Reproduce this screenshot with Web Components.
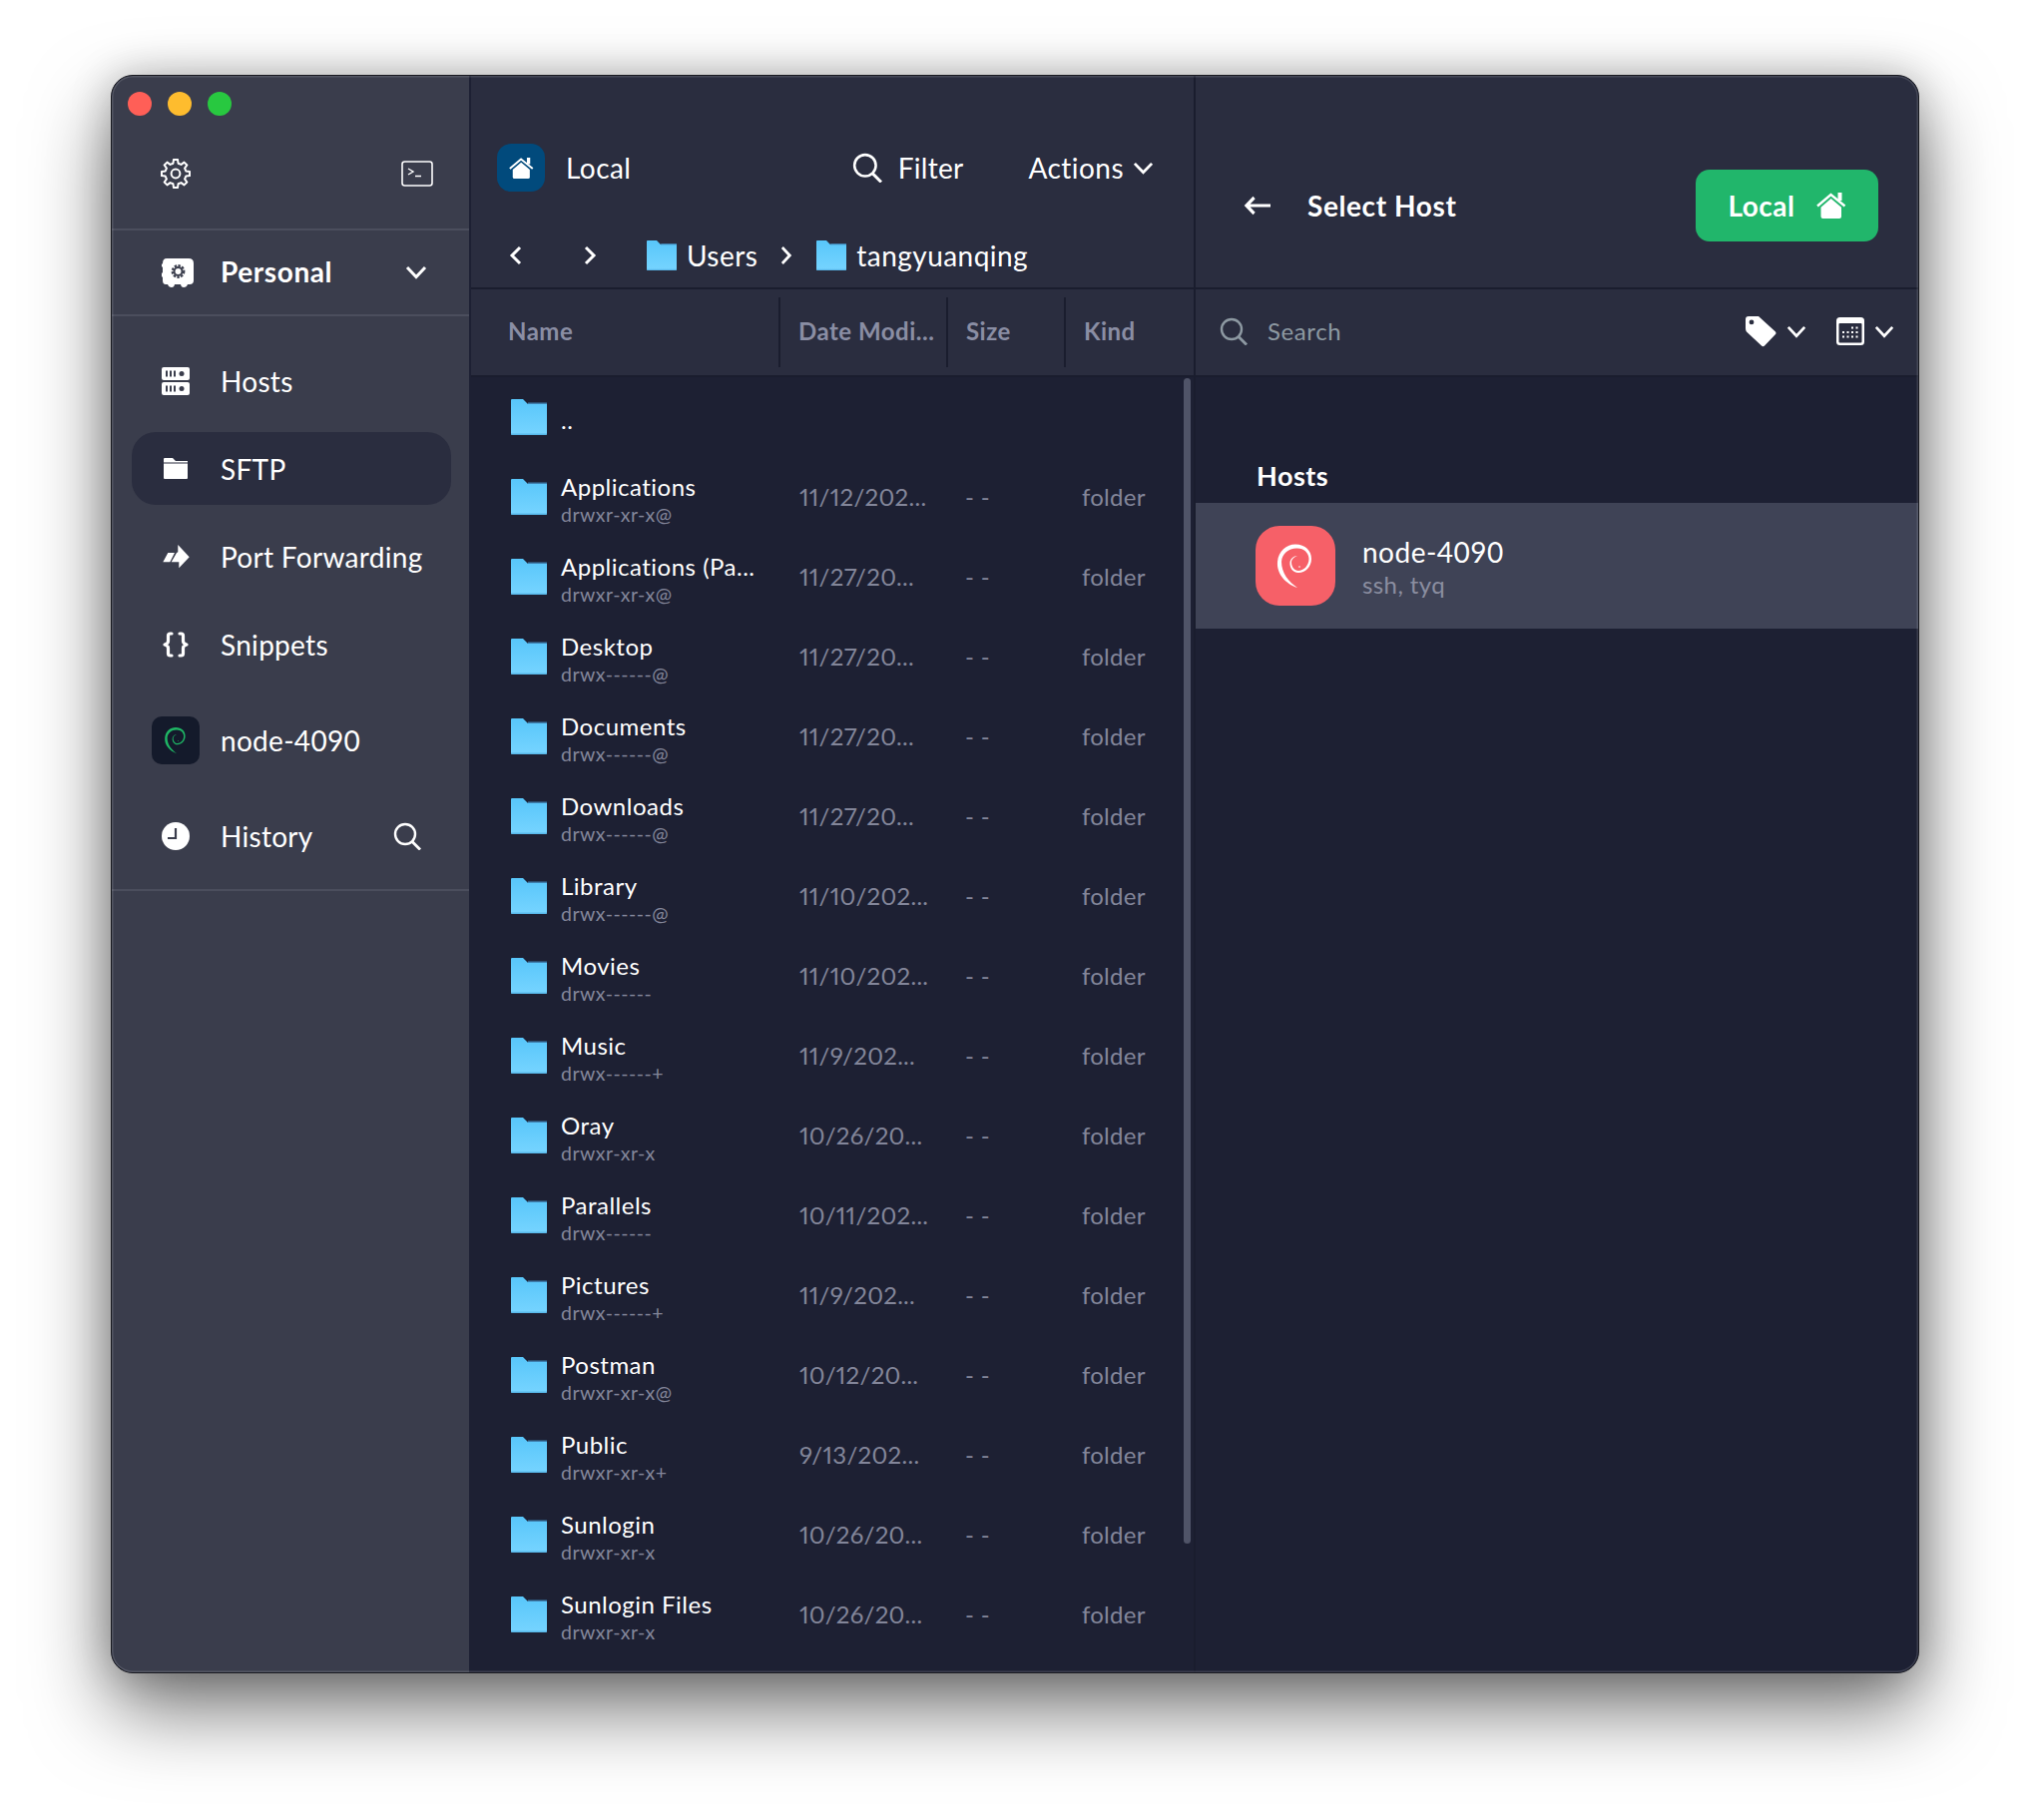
<!DOCTYPE html>
<html lang="en">
<head>
<meta charset="utf-8">
<title>SFTP</title>
<style>
  html,body{margin:0;background:#fff}
  body{padding:75px 0 0 111px;height:1824px;box-sizing:border-box;overflow:hidden;font-family:"Lato","Noto Sans",sans-serif;color:#fff}
</style>
</head>
<body>
<app-window>
  <side-bar slot="side">
    <nav-item icon="hosts">Hosts</nav-item>
    <nav-item icon="sftp" active>SFTP</nav-item>
    <nav-item icon="port">Port Forwarding</nav-item>
    <nav-item icon="snippets">Snippets</nav-item>
    <nav-item icon="debian" spaced>node-4090</nav-item>
    <nav-item icon="clock" spaced search>History</nav-item>
  </side-bar>
  <file-panel slot="files">
    <file-row name=".."></file-row>
    <file-row name="Applications" perm="drwxr-xr-x@" date="11/12/202..."></file-row>
    <file-row name="Applications (Pa..." perm="drwxr-xr-x@" date="11/27/20..."></file-row>
    <file-row name="Desktop" perm="drwx------@" date="11/27/20..."></file-row>
    <file-row name="Documents" perm="drwx------@" date="11/27/20..."></file-row>
    <file-row name="Downloads" perm="drwx------@" date="11/27/20..."></file-row>
    <file-row name="Library" perm="drwx------@" date="11/10/202..."></file-row>
    <file-row name="Movies" perm="drwx------" date="11/10/202..."></file-row>
    <file-row name="Music" perm="drwx------+" date="11/9/202..."></file-row>
    <file-row name="Oray" perm="drwxr-xr-x" date="10/26/20..."></file-row>
    <file-row name="Parallels" perm="drwx------" date="10/11/202..."></file-row>
    <file-row name="Pictures" perm="drwx------+" date="11/9/202..."></file-row>
    <file-row name="Postman" perm="drwxr-xr-x@" date="10/12/20..."></file-row>
    <file-row name="Public" perm="drwxr-xr-x+" date="9/13/202..."></file-row>
    <file-row name="Sunlogin" perm="drwxr-xr-x" date="10/26/20..."></file-row>
    <file-row name="Sunlogin Files" perm="drwxr-xr-x" date="10/26/20..."></file-row>
  </file-panel>
  <host-panel slot="hosts"></host-panel>
</app-window>
<script>
function gearPath(){
  const cx=15,cy=15,n=8,R=14.2,r=10.6;let d='';
  for(let i=0;i<n;i++){
    const a=i*2*Math.PI/n-Math.PI/2,s=Math.PI/n;
    const pts=[[r,a-s*.62],[R,a-s*.36],[R,a+s*.36],[r,a+s*.62]];
    pts.forEach((p,j)=>{
      const x=(cx+p[0]*Math.cos(p[1])).toFixed(2),y=(cy+p[0]*Math.sin(p[1])).toFixed(2);
      d+=(i===0&&j===0?'M':'L')+x+' '+y;
    });
  }
  return d+'Z';
}
const SWIRL='M42 62C30 58 21 48 22 36C23 25 31 18.5 40 18.5C50 18.5 56 25 56 33C56 41 50 47 43 47C37 47 34 41.5 34.5 36.5C35 33 38 30 42 30C39 31 36 33.5 36 36.5C36 41 39 45 43 45C48 45 53.5 40 53.5 33C53.5 27 48 22 41 22.5C33 22.5 26.5 28 26 36C26 47 33 56 42 62Z';
const ICONS={
  gear:['0 0 30 30',`<path d="${gearPath()}" fill="none" stroke="currentColor" stroke-width="2" stroke-linejoin="round"/><circle cx="15" cy="15" r="4.4" fill="none" stroke="currentColor" stroke-width="2"/>`],
  terminal:['0 0 32 26',`<rect x="1" y="1" width="30" height="24" rx="2.5" fill="none" stroke="currentColor" stroke-width="1.6"/><path d="M7 8l5 3-5 3" fill="none" stroke="currentColor" stroke-width="1.4"/><path d="M14 15.5h6" stroke="currentColor" stroke-width="1.4"/>`],
  vault:['0 0 32 29',`<path fill="currentColor" fill-rule="evenodd" d="M5 0H27Q32 0 32 5V22Q32 26 28 26H26Q25 29 22 29Q19.500 29 19 26H13Q12.500 29 10 29Q7 29 6 26H4Q1 26 1 22V19L0 18V15L1 14V9L0 8V6L1 5Q1 0 5 0Z"/><circle cx="16.500" cy="13" r="5.800" fill="none" stroke="#3a3d4c" stroke-width="2.200" stroke-dasharray="2.400 1.400"/><circle cx="16.500" cy="13" r="4" fill="none" stroke="#3a3d4c" stroke-width="2"/>`],
  hosts:['0 0 28 28',`<rect width="28" height="13" rx="2" y="0" fill="currentColor"/><rect width="28" height="13" rx="2" y="15" fill="currentColor"/><g fill="#3a3d4c"><rect x="4" y="3.500" width="2" height="6"/><rect x="8" y="3.500" width="2" height="6"/><rect x="12" y="3.500" width="2" height="6"/><circle cx="20" cy="6.500" r="2.500"/><rect x="4" y="18.500" width="2" height="6"/><rect x="8" y="18.500" width="2" height="6"/><rect x="12" y="18.500" width="2" height="6"/><circle cx="20" cy="21.500" r="2.500"/></g>`],
  sftp:['0 0 24 21',`<path fill="currentColor" d="M0 1Q0 0 1 0H9L12 3H24V4.500H0ZM0 5.500H24V20Q24 21 23 21H1Q0 21 0 20Z"/>`],
  port:['0 0 27 24',`<path fill="currentColor" d="M.3 17.300 5.300 8H12L7.300 17.300ZM8.700 17.300 14 8 15.300 7.300V0L26.700 12.300 16.300 23.300V17.300Z"/>`],
  snippets:['0 0 28 26',`<path fill="none" stroke="currentColor" stroke-width="3.200" stroke-linecap="round" stroke-linejoin="round" d="M10 2H8.500Q6.500 2 6.500 4V9.500Q6.500 12 3 13Q6.500 14 6.500 16.500V22Q6.500 24 8.500 24H10M18 2H19.500Q21.500 2 21.500 4V9.500Q21.500 12 25 13Q21.500 14 21.500 16.500V22Q21.500 24 19.500 24H18"/>`],
  clock:['0 0 28 28',`<circle cx="14" cy="14" r="14" fill="currentColor"/><path d="M14 6V16H6" fill="none" stroke="#3a3d4c" stroke-width="2.200"/>`],
  search:['0 0 28 28',`<circle cx="12" cy="12" r="10" fill="none" stroke="currentColor" stroke-width="2.400"/><path d="M19 19.500L27 27.500" stroke="currentColor" stroke-width="2.800"/>`],
  chev:['0 0 22 14',`<path d="M2 2L11 11.500L20 2" fill="none" stroke="currentColor" stroke-width="3"/>`],
  left:['0 0 13 20',`<path d="M11 2L3 10L11 18" fill="none" stroke="currentColor" stroke-width="3"/>`],
  right:['0 0 13 20',`<path d="M2 2L10 10L2 18" fill="none" stroke="currentColor" stroke-width="3"/>`],
  back:['0 0 28 20',`<path d="M11 2L3 10L11 18M3 10H28" fill="none" stroke="currentColor" stroke-width="3.200"/>`],
  home:['0 0 30 26',`<path fill="none" stroke="currentColor" stroke-width="2.400" d="M1 13.500L14.500 2L28.500 13.500"/><rect x="21.500" y="0" width="4" height="8" fill="currentColor"/><path fill="currentColor" d="M14.600 6L25 14.800V24Q25 26 23 26H6.500Q4.500 26 4.500 24V14.800Z"/>`],
  tag:['0 0 31 31',`<path fill="currentColor" fill-rule="evenodd" d="M3 0H13L30 15.500Q31 17 30 18L19 29.500Q17.500 31 16 29.500L1 15.500Q0 14.500 0 12V3Q0 0 3 0ZM6 3.500A2.400 2.400 0 1 0 6 8.300A2.400 2.400 0 1 0 6 3.500Z"/>`],
  calendar:['0 0 28 28',`<rect width="28" height="28" rx="3.500" fill="currentColor"/><rect x="2.500" y="6" width="23" height="19.500" rx="1" fill="#2a2d3f"/><g fill="currentColor"><rect x="15" y="9.500" width="2" height="2"/><rect x="19.500" y="9.500" width="2" height="2"/><rect x="6" y="14" width="2" height="2"/><rect x="10.500" y="14" width="2" height="2"/><rect x="15" y="14" width="2" height="2"/><rect x="19.500" y="14" width="2" height="2"/><rect x="6" y="18.500" width="2" height="2"/><rect x="10.500" y="18.500" width="2" height="2"/><rect x="15" y="18.500" width="2" height="2"/><rect x="19.500" y="18.500" width="2" height="2"/></g>`],
  swirl:['0 0 80 80',`<path fill="currentColor" d="${SWIRL}"/><circle cx="44" cy="41" r=".8" fill="currentColor"/>`]
};
let folderId=0;
class UiIcon extends HTMLElement{
  connectedCallback(){
    const root=this.shadowRoot||this.attachShadow({mode:'open'});
    const ic=ICONS[this.getAttribute('name')];
    const w=this.getAttribute('w'),h=this.getAttribute('h');
    root.innerHTML=`<style>:host{display:inline-flex;flex:none;width:${w}px;height:${h}px}svg{display:block;width:100%;height:100%}</style><svg viewBox="${ic[0]}" preserveAspectRatio="none" aria-hidden="true">${ic[1]}</svg>`;
  }
}
class FolderIcon extends HTMLElement{
  connectedCallback(){
    const root=this.shadowRoot||this.attachShadow({mode:'open'});
    const s=this.getAttribute('size')||36,id='fg'+(++folderId);
    root.innerHTML=`<style>:host{display:inline-flex;flex:none;width:${s}px;height:${s}px}svg{display:block;width:100%;height:100%}</style>
    <svg viewBox="0 0 36 36" aria-hidden="true"><defs><linearGradient id="${id}" x1="0" y1="0" x2="0" y2="1"><stop offset="0" stop-color="#58c6fa"/><stop offset="1" stop-color="#76d4ff"/></linearGradient></defs>
    <path fill="#3f7fae" d="M17 3.500H36V9H17Z"/>
    <path fill="url(#${id})" d="M1 0H12L17 5H36V34.500Q36 36 34.500 36H1.500Q0 36 0 34.500V1Q0 0 1 0Z"/>
    <path fill="#58b8ea" d="M0 34.500H36Q36 36 34.500 36H1.500Q0 36 0 34.500Z"/></svg>`;
  }
}
class AppWindow extends HTMLElement{
  constructor(){
    super();
    this.attachShadow({mode:'open'}).innerHTML=`<style>
      :host{display:grid;grid-template-columns:360px 726px 1fr;width:1812px;height:1602px;box-sizing:border-box;border:1px solid #17181f;border-radius:22px;overflow:hidden;position:relative;background:#1d2033;box-shadow:0 36px 80px rgba(0,0,0,.55),0 0 40px rgba(0,0,0,.22)}
      .edge{position:absolute;inset:0;border-radius:21px;box-shadow:inset 0 0 0 1.500px rgba(255,255,255,.13);pointer-events:none}
    </style><slot name="side"></slot><slot name="files"></slot><slot name="hosts"></slot><div class="edge"></div>`;
  }
}
class SideBar extends HTMLElement{
  constructor(){
    super();
    this.attachShadow({mode:'open'}).innerHTML=`<style>
      :host{display:flex;flex-direction:column;background:#3a3d4c;border-right:2px solid #1d2033;box-sizing:border-box;font-size:28px;color:#fff}
      .top{height:153px;box-sizing:border-box;padding:16px 0 0 16px;display:flex;flex-direction:column}
      .lights{display:flex;gap:16px}
      .lights i{width:24px;height:24px;border-radius:50%;display:block}
      .tools{display:flex;justify-content:space-between;align-items:center;margin-top:43px;padding:0 36px 0 35px;height:30px;margin-left:-2px}
      .vault{height:84px;display:flex;align-items:center;border-top:2px solid #4b4e5d;border-bottom:2px solid #4b4e5d;padding-left:50px;font-weight:700;box-sizing:content-box}
      .vault span{margin-left:27px;flex:1;letter-spacing:.6px;padding-bottom:2px}
      .vault .c{margin-right:42px}
      nav{display:flex;flex-direction:column;gap:16px;padding:29px 18px 17px 20px;border-bottom:2px solid #4b4e5d}
    </style>
    <div class="top"><div class="lights"><i style="background:#ff5f57"></i><i style="background:#febc2e"></i><i style="background:#28c840"></i></div>
      <div class="tools"><ui-icon name="gear" w="30" h="30"></ui-icon><ui-icon name="terminal" w="32" h="26"></ui-icon></div></div>
    <div class="vault"><ui-icon name="vault" w="32" h="29"></ui-icon><span>Personal</span><ui-icon class="c" name="chev" w="22" h="14"></ui-icon></div>
    <nav><slot></slot></nav>`;
  }
}
class NavItem extends HTMLElement{
  connectedCallback(){
    if(this.shadowRoot)return;
    const n=this.getAttribute('icon');
    const sizes={hosts:[28,28],sftp:[24,21],port:[27,24],snippets:[28,26],clock:[28,28]};
    let ic;
    if(n==='debian') ic=`<span class="tile"><ui-icon name="swirl" w="48" h="48"></ui-icon></span>`;
    else ic=`<ui-icon name="${n}" w="${sizes[n][0]}" h="${sizes[n][1]}"></ui-icon>`;
    this.attachShadow({mode:'open'}).innerHTML=`<style>
      :host{display:flex;align-items:center;height:72px;border-radius:24px;padding-left:20px;padding-right:30px;font-size:28px;letter-spacing:.3px;color:#fff;white-space:nowrap}
      :host([active]){background:#2a2d3f;height:73px;margin-top:-1px}
      :host([spaced]){margin-top:8px}
      .i{width:48px;display:flex;justify-content:center;align-items:center;flex:none;margin-right:21px}
      .tile{width:48px;height:48px;border-radius:10px;background:#141a2b;color:#1fb765;display:flex}
      .t{flex:1}
    </style><span class="i">${ic}</span><span class="t"><slot></slot></span>${this.hasAttribute('search')?'<ui-icon name="search" w="28" h="28"></ui-icon>':''}`;
  }
}
class FilePanel extends HTMLElement{
  constructor(){
    super();
    this.attachShadow({mode:'open'}).innerHTML=`<style>
      :host{display:flex;flex-direction:column;background:#1d2033;border-right:2px solid #1a1d2e;box-sizing:border-box;color:#fff;font-size:28px;letter-spacing:.45px;min-width:0}
      header{height:212px;box-sizing:border-box;padding:68px 40px 8px 26px;background:#2a2d3f;display:flex;flex-direction:column;gap:40px}
      .r{display:flex;align-items:center;height:48px}
      .tile{width:48px;height:48px;border-radius:14px;background:#014a7c;display:flex;align-items:center;justify-content:center;margin-right:21px}
      .r .sp{flex:1}
      .filter{margin-right:65px;display:flex;align-items:center;gap:16px;letter-spacing:.3px}
      .crumbs{padding-left:12px}
      .crumbs .f{margin-right:10px}
      .cols{box-sizing:border-box;padding:8px 0;background:#2a2d3f;border-top:2px solid #1a1d2e;border-bottom:2px solid #1a1d2e;display:grid;grid-template-columns:308px 168px 118px 1fr;height:90px;font-size:24px;font-weight:700;color:#8a8ea4;letter-spacing:.5px;align-items:stretch}
      .cols div{display:flex;align-items:center;padding:0 0 4px 18px;border-left:2px solid #1a1d2e}
      .cols div:first-child{border-left:0;padding-left:37px}
      .list{flex:1;position:relative;overflow:hidden}
      .bar{position:absolute;top:1px;right:3px;width:7px;height:1168px;border-radius:4px;background:#505468}
    </style>
    <header>
      <div class="r"><span class="tile"><ui-icon name="home" w="25" h="21"></ui-icon></span><span>Local</span><span class="sp"></span>
        <span class="filter"><ui-icon name="search" w="30" h="30"></ui-icon><span>Filter</span></span>
        <span>Actions</span><ui-icon name="chev" w="21" h="13" style="margin-left:9px"></ui-icon></div>
      <div class="r crumbs"><ui-icon name="left" w="13" h="20"></ui-icon><ui-icon name="right" w="13" h="20" style="margin-left:62px"></ui-icon>
        <folder-icon size="30" style="margin-left:50px" class="f"></folder-icon><span>Users</span><ui-icon name="right" w="12" h="20" style="margin:0 24px 0 23px"></ui-icon><folder-icon size="30" class="f"></folder-icon><span>tangyuanqing</span></div>
    </header>
    <div class="cols"><div>Name</div><div>Date Modi...</div><div>Size</div><div>Kind</div></div>
    <div class="list"><slot></slot><div class="bar"></div></div>`;
  }
}
class FileRow extends HTMLElement{
  connectedCallback(){
    if(this.shadowRoot)return;
    const g=k=>this.getAttribute(k)||'';
    const perm=g('perm'),date=g('date');
    this.attachShadow({mode:'open'}).innerHTML=`<style>
      :host{display:grid;grid-template-columns:308px 168px 118px 1fr;height:80px;align-items:center}
      .n{display:flex;align-items:center;padding-left:40px;gap:14px}
      .txt{display:flex;flex-direction:column;white-space:nowrap;margin-top:-3px}
      .a{font-size:24px;line-height:28px;color:#fff;letter-spacing:.5px}
      .p{font-size:19.500px;line-height:24px;color:#83869a;margin-top:2px;letter-spacing:.5px;margin-bottom:-9px}
      .a.only{padding-top:8px}
      .d{padding:0 0 2px 20px;font-size:24px;color:#83869a;letter-spacing:.3px;white-space:nowrap;font-variant-numeric:proportional-nums}
      .dt{padding-left:21px}
      .k{padding-left:18px;letter-spacing:.25px}
    </style><div class="n"><folder-icon></folder-icon><div class="txt"><div class="a ${perm?'':'only'}"></div>${perm?'<div class="p"></div>':''}</div></div>
    ${perm?`<div class="d dt"></div><div class="d" style="padding-left:19px">- -</div><div class="d k">folder</div>`:''}`;
    const r=this.shadowRoot;
    r.querySelector('.a').textContent=g('name');
    if(perm){r.querySelector('.p').textContent=perm;r.querySelector('.dt').textContent=date;}
  }
}
class HostPanel extends HTMLElement{
  constructor(){
    super();
    this.attachShadow({mode:'open'}).innerHTML=`<style>
      :host{display:flex;flex-direction:column;background:#1d2033;color:#fff;font-size:28px;min-width:0}
      header{height:212px;box-sizing:border-box;padding:48px 40px 0 48px;background:#2a2d3f;display:flex;align-items:center}
      .ttl{font-weight:700;margin-left:37px;flex:1;letter-spacing:.6px}
      button{all:unset;width:183px;height:72px;border-radius:14px;background:#21b66b;display:flex;align-items:center;justify-content:center;gap:21px;font-family:inherit;font-size:28px;font-weight:700;color:#fff;letter-spacing:.5px}
      .search{box-sizing:border-box;background:#2a2d3f;border-top:2px solid #1a1d2e;border-bottom:2px solid #1a1d2e;height:90px;display:flex;align-items:center;padding:0 24px 2px;color:#8d99a2;font-size:24px;letter-spacing:.6px}
      .search .s{margin-right:20px}
      .search .sp{flex:1;padding-bottom:2px}
      .search .w{color:#fff}
      .lab{padding:79px 0 7px 61px;font-size:27px;font-weight:700;line-height:40px;letter-spacing:.5px}
      .host{height:126px;background:#3f4356;display:flex;align-items:center;padding-left:60px;gap:27px}
      .tile{width:80px;height:80px;border-radius:24px;background:#f66068;display:flex;color:#fff}
      .nm{font-size:28px;line-height:34px;letter-spacing:.5px;margin-top:4px}
      .sb{font-size:24px;line-height:32px;color:#8b8ea0;letter-spacing:.4px}
    </style>
    <header><ui-icon name="back" w="27" h="20"></ui-icon><span class="ttl">Select Host</span><button>Local<ui-icon name="home" w="30" h="26"></ui-icon></button></header>
    <div class="search"><ui-icon class="s" name="search" w="28" h="28"></ui-icon><span class="sp">Search</span>
      <ui-icon class="w" name="tag" w="31" h="31"></ui-icon><ui-icon class="w" name="chev" w="20" h="13" style="margin-left:10px"></ui-icon>
      <ui-icon class="w" name="calendar" w="28" h="28" style="margin-left:30px"></ui-icon><ui-icon class="w" name="chev" w="20" h="13" style="margin-left:10px"></ui-icon></div>
    <div class="lab">Hosts</div>
    <div class="host"><span class="tile"><ui-icon name="swirl" w="80" h="80"></ui-icon></span><div><div class="nm">node-4090</div><div class="sb">ssh, tyq</div></div></div>`;
  }
}
customElements.define('ui-icon',UiIcon);
customElements.define('folder-icon',FolderIcon);
customElements.define('nav-item',NavItem);
customElements.define('file-row',FileRow);
customElements.define('side-bar',SideBar);
customElements.define('file-panel',FilePanel);
customElements.define('host-panel',HostPanel);
customElements.define('app-window',AppWindow);
</script>
</body>
</html>
